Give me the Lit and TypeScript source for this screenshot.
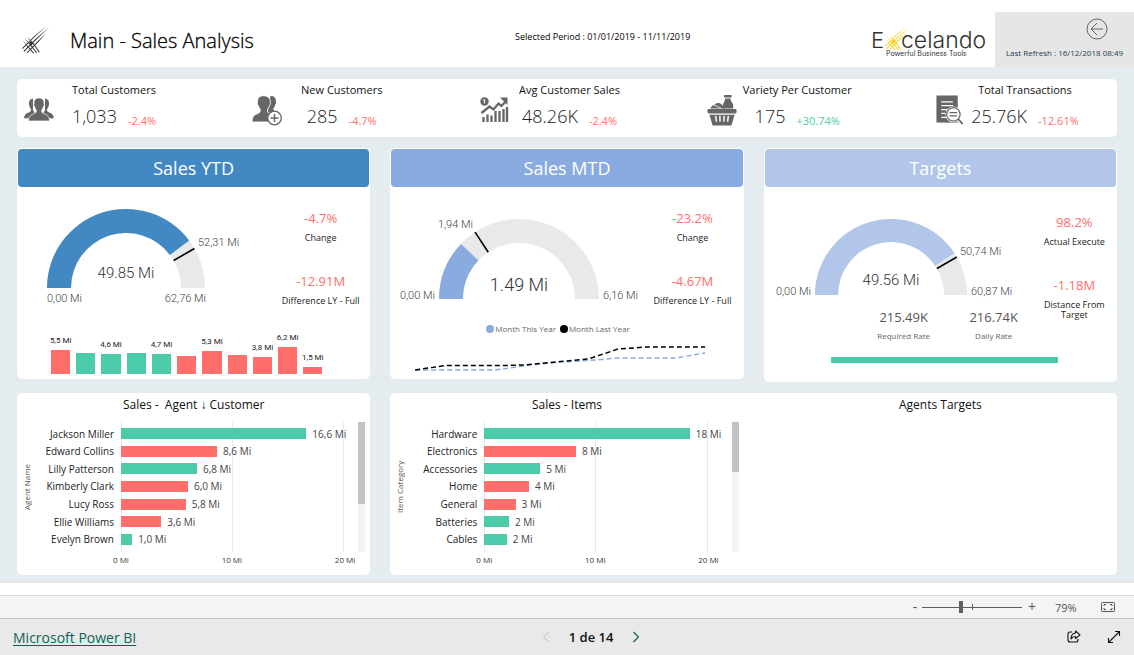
import { LitElement, html, svg, css } from "lit";
import { customElement, property } from "lit/decorators.js";
import { classMap } from "lit/directives/class-map.js";

type Tone = "up" | "down";

interface Label {
  text: string;
  x: number;
  y: number;
  anchor: "start" | "middle" | "end";
}

interface GaugeSpec {
  name: string;
  width: number;
  height: number;
  cx: number;
  cy: number;
  outer: number;
  inner: number;
  value: number;
  target: number;
  color: string;
  labels: Label[];
  callout: Label;
  large?: boolean;
}

interface Bar {
  name: string;
  label: string;
  share: number;
  tone: Tone;
}

const usersIcon = svg`<svg class="icon" viewBox="0 0 30 24">
  <g fill="#666">
    <path d="M9 0.8c-3 0-4.2 2.2-4 5 .1 2.300.8 4 1.900 5.200.3 1.700-.2 2.500-1.700 3.200C2.500 15.400 0.700 16 0 20.200h6.200c.8-2.200 2.400-3.200 5-4.200L9 12z"/>
    <path d="M21 0.800c3 0 4.200 2.200 4 5-.1 2.300-.8 4-1.900 5.200-.3 1.700.2 2.500 1.700 3.200 2.700 1.200 4.500 1.800 5.200 6h-6.200c-.8-2.200-2.400-3.200-5-4.200L21 12z"/>
    <path stroke="#fff" stroke-width="0.700" d="M15 0c-3.800 0-5.300 2.500-5 5.800-.6.400-.3 2.200.6 2.800.2 1.400.9 2.500 1.600 3.300.3 2-.2 2.900-2.100 3.700C7.100 17 5 17.500 4.400 23h21.200c-.6-5.500-2.700-6-5.700-7.400-1.900-.8-2.400-1.700-2.100-3.700.7-.8 1.400-1.900 1.600-3.300.9-.6 1.200-2.400.6-2.800C20.300 2.500 18.800 0 15 0z"/>
  </g></svg>`;

const newUserIcon = svg`<svg class="icon tall" viewBox="0 0 30 30">
  <g fill="#666">
    <path d="M18.500 0.500c3.800-.2 5.700 2.200 5.400 5.800.3.800.1 2-.6 2.500-.3 2-1 3.200-1.900 4.200 0 1.800.4 2.800 3 4l-6 6h-4z"/>
    <path stroke="#fff" stroke-width="0.900" d="M11.500 0.200C7 0.200 5.200 3 5.600 6.800c-.7.500-.3 2.600.7 3.200.3 1.700 1 2.900 1.900 3.800.3 2.400-.3 3.300-2.500 4.300C2.500 19.500 0.300 20 0 26.500h20l2-7c-2-1-5.200-1.500-6-2.500-.6-.8-.6-2-.4-3.200.9-.9 1.600-2.100 1.900-3.800 1-.6 1.400-2.700.7-3.200C18.600 3 16 0.200 11.500 0.200z"/>
  </g>
  <circle cx="22.500" cy="22.500" r="6.800" fill="#fff" stroke="#666" stroke-width="1.300"/>
  <path d="M18.500 22.500h8M22.500 18.500v8" stroke="#666" stroke-width="1.500"/></svg>`;

const trendIcon = svg`<svg class="icon" viewBox="0 0 30 26">
  <circle cx="4.500" cy="4.500" r="4.200" fill="#666"/>
  <path d="M4.500 2.500v4M3.500 3.200l1-.7" stroke="#fff" stroke-width="1.100" fill="none"/>
  <path d="M1.500 16l8-6.500 4 3 5-6 3 2.500 5-5.500" stroke="#666" stroke-width="2.300" fill="none"/>
  <path d="M20 0.500h7.500v7.500z" fill="#666"/>
  <path d="M3.500 25v-5M7.500 25v-7.500M11.500 25v-6.500M15.500 25V14M19.500 25v-11M23.500 25V12M27 25V10" stroke="#666" stroke-width="2.300"/></svg>`;

const basketIcon = svg`<svg class="icon tall" viewBox="0 0 30 32">
  <g fill="#666">
    <rect x="17" y="0" width="8" height="2.600" rx="0.800"/>
    <path d="M18.200 3.500h5.600l.4 2.500 2.300 3.500V14H16V9.500L17.800 6z"/>
    <path d="M3 14c.3-2 2-3.500 4.500-4C9 7.800 13 7.600 15 10l3 4z"/>
    <path d="M6.500 10.500l7.500 3" stroke="#fff" stroke-width="0.800"/>
    <rect x="0" y="14.500" width="30" height="4.600" rx="1.500"/>
    <path d="M2 20.500h26l-3 10.100c-.2.600-.6.900-1.200.9H6.200c-.6 0-1-.3-1.200-.9z"/>
  </g>
  <path d="M8.500 21.500l.7 6M12.800 21.500l.2 6M17.200 21.500l-.2 6M21.500 21.500l-.7 6" stroke="#fff" stroke-width="1.500"/></svg>`;

const transactionIcon = svg`<svg class="icon tall" viewBox="0 0 30 32">
  <path d="M1 0.500h22v28H1z" fill="#666"/>
  <path d="M6 7h12M6 11h12M6 15h6M6 19h4M6 23h5" stroke="#fff" stroke-width="1.300"/>
  <circle cx="18.500" cy="20" r="8.200" fill="#fff"/>
  <circle cx="18.500" cy="20" r="6.900" fill="#fff" stroke="#666" stroke-width="1.300"/>
  <path d="M14.500 18.300h8M14.500 21.500h8" stroke="#666" stroke-width="1.300"/>
  <path d="M23.500 25l4.500 4.800" stroke="#666" stroke-width="1.800"/></svg>`;

const kpis = [
  { name: "Total Customers", value: "1,033", delta: "-2.4%", tone: "down", icon: usersIcon },
  { name: "New Customers", value: "285", delta: "-4.7%", tone: "down", icon: newUserIcon },
  { name: "Avg Customer Sales", value: "48.26K", delta: "-2.4%", tone: "down", icon: trendIcon },
  { name: "Variety Per Customer", value: "175", delta: "+30.74%", tone: "up", icon: basketIcon },
  { name: "Total Transactions", value: "25.76K", delta: "-12.61%", tone: "down", icon: transactionIcon },
];

const ytd: GaugeSpec = {
  name: "Sales YTD", width: 254, height: 125, cx: 108, cy: 101, outer: 79, inner: 55,
  value: 49.85 / 62.76, target: 52.31 / 62.76, color: "#4289c3",
  labels: [
    { text: "0,00 Mi", x: 29, y: 115, anchor: "start" },
    { text: "62,76 Mi", x: 188, y: 115, anchor: "end" },
    { text: "52,31 Mi", x: 180, y: 59, anchor: "start" },
  ],
  callout: { text: "49.85 Mi", x: 108, y: 91, anchor: "middle" },
};

const mtd: GaugeSpec = {
  name: "Sales MTD", width: 251, height: 125, cx: 128, cy: 112, outer: 80, inner: 56,
  value: 1.49 / 6.16, target: 1.94 / 6.16, color: "#8aabdf",
  labels: [
    { text: "0,00 Mi", x: 44, y: 112, anchor: "end" },
    { text: "6,16 Mi", x: 212, y: 112, anchor: "start" },
    { text: "1,94 Mi", x: 82, y: 41, anchor: "end" },
  ],
  callout: { text: "1.49 Mi", x: 128, y: 104, anchor: "middle" },
  large: true,
};

const targets: GaugeSpec = {
  name: "Targets", width: 274, height: 120, cx: 126, cy: 108, outer: 76, inner: 53,
  value: 49.56 / 60.87, target: 50.74 / 60.87, color: "#b1c6e8",
  labels: [
    { text: "0,00 Mi", x: 46, y: 108, anchor: "end" },
    { text: "60,87 Mi", x: 206, y: 108, anchor: "start" },
    { text: "50,74 Mi", x: 195, y: 68, anchor: "start" },
  ],
  callout: { text: "49.56 Mi", x: 126, y: 98, anchor: "middle" },
};

const months: { height: number; tone: Tone; label?: string }[] = [
  { height: 24, tone: "down", label: "5,5 Mi" },
  { height: 21, tone: "up" },
  { height: 20, tone: "up", label: "4,6 Mi" },
  { height: 21, tone: "up" },
  { height: 20, tone: "up", label: "4,7 Mi" },
  { height: 18, tone: "down" },
  { height: 23, tone: "down", label: "5,3 Mi" },
  { height: 19, tone: "down" },
  { height: 17, tone: "down", label: "3,8 Mi" },
  { height: 27, tone: "down", label: "6,2 Mi" },
  { height: 7, tone: "down", label: "1,5 Mi" },
];

const agents: Bar[] = [
  { name: "Jackson Miller", label: "16,6 Mi", share: 83, tone: "up" },
  { name: "Edward Collins", label: "8,6 Mi", share: 43, tone: "down" },
  { name: "Lilly Patterson", label: "6,8 Mi", share: 34, tone: "up" },
  { name: "Kimberly Clark", label: "6,0 Mi", share: 30, tone: "down" },
  { name: "Lucy Ross", label: "5,8 Mi", share: 29, tone: "down" },
  { name: "Ellie Williams", label: "3,6 Mi", share: 18, tone: "down" },
  { name: "Evelyn Brown", label: "1,0 Mi", share: 5, tone: "up" },
];

const items: Bar[] = [
  { name: "Hardware", label: "18 Mi", share: 92, tone: "up" },
  { name: "Electronics", label: "8 Mi", share: 41, tone: "down" },
  { name: "Accessories", label: "5 Mi", share: 25, tone: "up" },
  { name: "Home", label: "4 Mi", share: 20, tone: "down" },
  { name: "General", label: "3 Mi", share: 14, tone: "down" },
  { name: "Batteries", label: "2 Mi", share: 11, tone: "up" },
  { name: "Cables", label: "2 Mi", share: 10, tone: "up" },
];

@customElement("arc-gauge")
export class ArcGauge extends LitElement {
  @property({ attribute: false }) spec!: GaugeSpec;

  static styles = css`
    :host { display: block; }
    svg { display: block; overflow: visible; }
    text { font-family: Roboto, sans-serif; font-weight: 300; font-size: 11px; fill: #444; }
    .callout { font-size: 15px; fill: #333; }
    .callout.large { font-size: 18px; }
  `;

  private point(radius: number, share: number) {
    const a = Math.PI * (1 - share);
    const { cx, cy } = this.spec;
    return `${(cx + radius * Math.cos(a)).toFixed(2)} ${(cy - radius * Math.sin(a)).toFixed(2)}`;
  }

  private arc(from: number, to: number) {
    const { outer, inner } = this.spec;
    return `M${this.point(outer, from)} A${outer} ${outer} 0 0 1 ${this.point(outer, to)}
      L${this.point(inner, to)} A${inner} ${inner} 0 0 0 ${this.point(inner, from)} Z`;
  }

  render() {
    const s = this.spec;
    return html`<svg width=${s.width} height=${s.height} role="img" aria-label=${s.name}>
      <path d=${this.arc(0, 1)} fill="#e9e9e9"></path>
      <path d=${this.arc(0, s.value)} fill=${s.color}></path>
      <path d=${`M${this.point(s.inner, s.target)} L${this.point(s.outer, s.target)}`} stroke="#000" stroke-width="1.600"></path>
      ${s.labels.map((l) => svg`<text x=${l.x} y=${l.y} text-anchor=${l.anchor}>${l.text}</text>`)}
      <text class=${classMap({ callout: true, large: !!s.large })} x=${s.callout.x} y=${s.callout.y} text-anchor="middle">${s.callout.text}</text>
    </svg>`;
  }
}

@customElement("bar-list")
export class BarList extends LitElement {
  @property() heading = "";
  @property({ attribute: "axis-title" }) axisTitle = "";
  @property({ attribute: false }) bars: Bar[] = [];
  @property({ type: Boolean, reflect: true }) compact = false;

  static styles = css`
    :host { display: block; --names: 77px; --right: 14px; --thumb: 82px; }
    :host([compact]) { --names: 67px; --right: 24px; --thumb: 50px; }
    .heading { margin: 0; padding-top: 4px; font-size: 12px; line-height: 16px; font-weight: 400; text-align: center; color: #111; white-space: pre; }
    .chart { display: grid; grid-template-columns: 20px var(--names) 1fr 7px; padding: 9px 5px 0 0; }
    .axis-title { writing-mode: vertical-rl; transform: rotate(180deg); text-align: center; font-size: 8px; line-height: 20px; color: #555; }
    .names, .bars { display: grid; grid-auto-rows: 1fr; padding: 3px 0 4px; }
    .names span { display: flex; align-items: center; justify-content: flex-end; font-size: 10px; color: #222; white-space: nowrap; }
    .plot { display: grid; height: 130px; margin-left: 7px; margin-right: var(--right); }
    .names { height: 123px; }
    .lines, .bars { grid-area: 1 / 1; }
    .lines { display: grid; grid-template-columns: 1fr 1fr; border-left: 1px solid #eaeaea; }
    .lines i { border-right: 1px solid #eaeaea; }
    .row { display: flex; align-items: center; gap: 6px; font-size: 10px; color: #444; white-space: nowrap; }
    .bar { height: 11px; flex: none; }
    .up { background: #4ccbaa; }
    .down { background: #ff6e6a; }
    .scroll { background: #f3f3f3; height: 130px; }
    .thumb { height: var(--thumb); background: #c2c2c2; }
    .ticks { grid-column: 3; display: flex; justify-content: space-between; margin-left: -1px; margin-right: calc(var(--right) - 11px); font-size: 8px; line-height: 16px; color: #333; }
  `;

  render() {
    return html`
      <h2 class="heading">${this.heading}</h2>
      <div class="chart">
        <div class="axis-title">${this.axisTitle}</div>
        <div class="names">${this.bars.map((b) => html`<span>${b.name}</span>`)}</div>
        <div class="plot">
          <div class="lines"><i></i><i></i></div>
          <div class="bars">
            ${this.bars.map((b) => html`<div class="row">
              <div class="bar ${b.tone}" style="width:${b.share}%"></div><span>${b.label}</span>
            </div>`)}
          </div>
        </div>
        <div class="scroll"><div class="thumb"></div></div>
        <div class="ticks"><span>0 Mi</span><span>10 Mi</span><span>20 Mi</span></div>
      </div>`;
  }
}

@customElement("app-root")
export class AppRoot extends LitElement {
  static styles = css`
    :host { display: block; font-family: "Open Sans", "Noto Sans", sans-serif; background: #fff; color: #222; }
    h1, h2, p { margin: 0; font-weight: 400; }
    button { border: 0; padding: 0; background: none; font: inherit; color: inherit; display: grid; place-items: center; cursor: pointer; }
    svg { display: block; }

    .header { display: flex; height: 67px; }
    .mark { margin: 26px 21px 0 22px; }
    .header h1 { font-size: 20px; line-height: 28px; font-weight: 300; padding-top: 27px; color: #000; -webkit-text-stroke: 0.3px #000; flex: 3; }
    .period { font-size: 9px; line-height: 14px; padding-top: 30px; color: #000; }
    .brand { flex: 2; display: flex; justify-content: flex-end; padding: 22px 8px 0 0; }
    .refresh { width: 139px; margin-top: 12px; background: #e6e6e6; display: flex; flex-direction: column; align-items: center; font-size: 8px; color: #24404f; }
    .refresh button { align-self: flex-end; margin: 6px 26px 0 0; }
    .refresh p { line-height: 12px; margin-top: 7px; }

    .canvas { background: #e4ecef; padding: 12px 17px 5px; display: grid; gap: 11px; border-bottom: 3px solid #e6e6e6; }
    .strip { background: #fff; border-radius: 5px; height: 58px; display: flex; justify-content: space-between; padding: 0 32px 0 7px; }
    .kpi { display: flex; width: 150px; }
    .icon { width: 30px; height: 26px; margin-top: 18px; flex: none; }
    .icon.tall { height: 31px; margin-top: 16px; }
    .kpi-text { width: 120px; display: flex; flex-direction: column; align-items: center; padding-top: 3px; }
    .kpi-name { font-size: 11px; line-height: 16px; color: #111; white-space: nowrap; }
    .kpi-row { display: flex; gap: 11px; align-items: flex-end; padding-top: 5px; }
    .kpi-value { font-size: 18px; line-height: 26px; font-weight: 300; color: #222; }
    .kpi-delta { font-size: 11px; line-height: 16px; }
    .up { color: #4ccbaa; }
    .down { color: #ff6e6a; }

    .cards { display: grid; grid-template-columns: repeat(3, 1fr); column-gap: 20px; align-items: start; }
    .card { background: #fff; border-radius: 5px; padding: 1px; }
    .card h2 { height: 38px; line-height: 38px; border-radius: 4px; color: #fff; text-align: center; font-size: 18px; }
    .ytd h2 { background: #4289c3; }
    .mtd h2 { background: #8aabdf; }
    .targets h2 { background: #b1c6e8; }
    .body { display: flex; }
    .metrics { flex: 1; text-align: center; padding-top: 21px; }
    .targets .metrics { padding: 25px 6px 0 0; }
    .metric + .metric { padding-top: 28px; }
    .metric b { display: block; font-weight: 400; font-size: 13px; line-height: 20px; }
    .metric span { display: block; font-size: 9px; line-height: 10px; padding-top: 5px; color: #222; }
    .ytd .metric span, .mtd .metric span { white-space: nowrap; }

    .months { display: flex; align-items: flex-end; gap: 6px; height: 62px; padding: 0 47px 4px 33px; }
    .month { flex: 1; min-width: 0; display: flex; flex-direction: column; align-items: center; }
    .month span { font: 400 8px/12px Roboto, sans-serif; white-space: nowrap; padding-bottom: 3px; color: #222; }
    .month i { display: block; width: 100%; }
    .month .up { background: #4ccbaa; }
    .month .down { background: #ff6e6a; }

    .legend { display: flex; justify-content: center; gap: 4px; padding-right: 18px; margin-top: 11px; font-size: 8px; line-height: 12px; color: #666; }
    .legend span { display: flex; align-items: center; }
    .dot { width: 8px; height: 8px; border-radius: 50%; margin-right: 1px; }
    .dot.this { background: #8aabdf; }
    .dot.last { background: #000; }

    .rates { display: grid; grid-template-columns: 90px 90px; padding-left: 94px; text-align: center; }
    .rates b { display: block; font-weight: 400; font-size: 13px; line-height: 20px; color: #555; }
    .rates span { display: block; font-size: 8px; line-height: 12px; padding-top: 3px; color: #666; }
    .progress { height: 6px; margin: 15px 58px 18px 66px; background: #4ccbaa; }

    .panel { background: #fff; border-radius: 5px; height: 182px; }
    .wide { grid-column: span 2; display: grid; grid-template-columns: 1fr 1fr; column-gap: 20px; }
    .wide h2 { font-size: 12px; line-height: 16px; padding-top: 4px; text-align: center; color: #111; }

    .zoom { margin-top: 12px; height: 22px; background: #f4f4f4; border-top: 1px solid #dcdcdc; border-bottom: 1px solid #c4c6c6; display: flex; align-items: center; justify-content: flex-end; padding-right: 19px; font-size: 14px; color: #555; }
    .zoom button { width: 14px; height: 20px; line-height: 20px; }
    .zoom button.fit { margin-left: 22px; }
    .zoom output { font-size: 11px; width: 24px; margin-left: 16px; }
    .range { appearance: none; -webkit-appearance: none; width: 100px; height: 12px; margin: 0 3px 0 0; background: linear-gradient(#605e5c, #605e5c) 0 50% / 100% 1px no-repeat, linear-gradient(#605e5c, #605e5c) 50% 50% / 1px 6px no-repeat; }
    .range::-webkit-slider-thumb { -webkit-appearance: none; width: 4px; height: 12px; background: #605e5c; }

    .footer { background: #e9e9e9; height: 36px; display: flex; align-items: center; justify-content: space-between; padding-left: 13px; }
    .footer a { color: #13605a; font-size: 14px; line-height: 20px; padding-top: 2px; text-underline-offset: 2px; }
    .pager { display: flex; align-items: center; font-size: 13px; font-weight: 600; color: #111; }
    .pager button { width: 46px; height: 32px; }
    .actions { display: flex; padding-left: 8px; }
    .actions button { width: 40px; height: 36px; }
  `;

  private mark(color: string, size: number) {
    return svg`<g fill=${color} transform="scale(${size / 28})">
      <path d="M0 23.200L12.500 10.500 25.500 0 13.300 11.200 0.700 23.900z"/>
      <path d="M1.500 26L14.500 13 28 1.500 15.400 13.800 2.300 26.700z"/>
      <path d="M5 27.300L16.500 15.600 25 7.500 17.300 16.300 5.700 28z"/>
      <path d="M4.800 10.500L11.700 17.300 18.500 27 17.600 27.500 10.900 18z"/>
      <path d="M2.200 12.200L9.200 19.200 15.800 27.700 15 28.200 8.400 19.900z"/>
      <path d="M0.300 14.500L6.700 21.200 12.500 28 11.600 28.400 5.900 21.900z"/>
      <circle cx="9.500" cy="18" r="1.800"/>
    </g>`;
  }

  private metric(value: string, name: string) {
    return html`<div class="metric"><b class="down">${value}</b><span>${name}</span></div>`;
  }

  render() {
    return html`
      <header class="header">
        <svg class="mark" width="27" height="28" aria-hidden="true">${this.mark("#333", 27)}</svg>
        <h1>Main - Sales Analysis</h1>
        <p class="period">Selected Period : 01/01/2019 - 11/11/2019</p>
        <div class="brand">
          <svg width="116" height="40" role="img" aria-label="Excelando Powerful Business Tools" font-family="Inter, sans-serif" fill="#333">
            <text x="0" y="26" font-size="22" font-weight="300">E</text>
            <g transform="translate(14 4)">${this.mark("#fccb0b", 24)}</g>
            <text x="30" y="26" font-size="23" font-weight="300">celando</text>
            <text x="15" y="34" font-size="7">Powerful Business Tools</text>
          </svg>
        </div>
        <div class="refresh">
          <button aria-label="Back">
            <svg width="22" height="22" fill="none" stroke="#666"><circle cx="11" cy="11" r="10"/><path d="M17 11H5M11 5L5 11l6 6"/></svg>
          </button>
          <p>Last Refresh : 16/12/2018 08:49</p>
        </div>
      </header>

      <main class="canvas">
        <section class="strip">
          ${kpis.map((k) => html`<div class="kpi">${k.icon}
            <div class="kpi-text">
              <span class="kpi-name">${k.name}</span>
              <div class="kpi-row"><span class="kpi-value">${k.value}</span><span class="kpi-delta ${k.tone}">${k.delta}</span></div>
            </div></div>`)}
        </section>

        <section class="cards">
          <article class="card ytd">
            <h2>Sales YTD</h2>
            <div class="body">
              <arc-gauge .spec=${ytd}></arc-gauge>
              <div class="metrics">${this.metric("-4.7%", "Change")}${this.metric("-12.91M", "Difference LY - Full")}</div>
            </div>
            <div class="months">
              ${months.map((m) => html`<div class="month">
                ${m.label ? html`<span>${m.label}</span>` : ""}<i class=${m.tone} style="height:${m.height}px"></i>
              </div>`)}
            </div>
          </article>

          <article class="card mtd">
            <h2>Sales MTD</h2>
            <div class="body">
              <arc-gauge .spec=${mtd}></arc-gauge>
              <div class="metrics">${this.metric("-23.2%", "Change")}${this.metric("-4.67M", "Difference LY - Full")}</div>
            </div>
            <div class="legend">
              <span><i class="dot this"></i>Month This Year</span>
              <span><i class="dot last"></i>Month Last Year</span>
            </div>
            <svg width="100%" height="43" viewBox="0 0 351 43" fill="none" stroke-width="1.500" stroke-dasharray="5 3" role="img" aria-label="Month this year and month last year">
              <path stroke="#8aabdf" d="M24 35H104L139 30 169 27 197 25.500 227 23H284L314 18"/>
              <path stroke="#000" d="M24 35L54 30.500H112L132 30 169 26.500 197 24 227 14 255 12H314"/>
            </svg>
          </article>

          <article class="card targets">
            <h2>Targets</h2>
            <div class="body">
              <div>
                <arc-gauge .spec=${targets}></arc-gauge>
                <div class="rates">
                  <div><b>215.49K</b><span>Required Rate</span></div>
                  <div><b>216.74K</b><span>Daily Rate</span></div>
                </div>
              </div>
              <div class="metrics">${this.metric("98.2%", "Actual Execute")}${this.metric("-1.18M", "Distance From Target")}</div>
            </div>
            <div class="progress"></div>
          </article>
        </section>

        <section class="cards">
          <article class="panel">
            <bar-list heading="Sales -  Agent ↓ Customer" axis-title="Agent Name" .bars=${agents}></bar-list>
          </article>
          <article class="panel wide">
            <bar-list compact heading="Sales - Items" axis-title="Item Category" .bars=${items}></bar-list>
            <h2>Agents Targets</h2>
          </article>
        </section>
      </main>

      <div class="zoom">
        <button aria-label="Zoom out">-</button>
        <input class="range" type="range" min="0" max="100" value="39" aria-label="Zoom">
        <button aria-label="Zoom in">+</button>
        <output>79%</output>
        <button class="fit" aria-label="Fit to page">
          <svg width="14" height="10" fill="none" stroke="#555"><rect x="0.500" y="0.500" width="13" height="9" rx="1"/><path d="M3 4V2.500H5M9 2.500h2V4M11 6v1.500H9M5 7.500H3V6"/></svg>
        </button>
      </div>

      <footer class="footer">
        <a href="#">Microsoft Power BI</a>
        <nav class="pager">
          <button aria-label="Previous page"><svg width="8" height="12" fill="none" stroke="#bbb"><path d="M6.500 1L1.500 6l5 5"/></svg></button>
          <span>1 de 14</span>
          <button aria-label="Next page"><svg width="8" height="12" fill="none" stroke="#13605a" stroke-width="1.200"><path d="M1.500 1l5 5-5 5"/></svg></button>
        </nav>
        <div class="actions">
          <button aria-label="Share">
            <svg width="14" height="14" fill="none" stroke="#111" stroke-width="1.100"><path d="M5 2H3Q1 2 1 4v6q0 2 2 2h6q2 0 2-2V9"/><path d="M8.500 1l4.500 3.800L8.500 8.500V6.500Q5.500 6.500 4 9 4 3.500 8.500 3z" stroke-linejoin="round"/></svg>
          </button>
          <button aria-label="Full screen">
            <svg width="14" height="14" fill="none" stroke="#111" stroke-width="1.100"><path d="M1.500 12.500l11-11M8 1.500h4.500V6M1.500 8v4.500H6"/></svg>
          </button>
        </div>
      </footer>`;
  }
}
